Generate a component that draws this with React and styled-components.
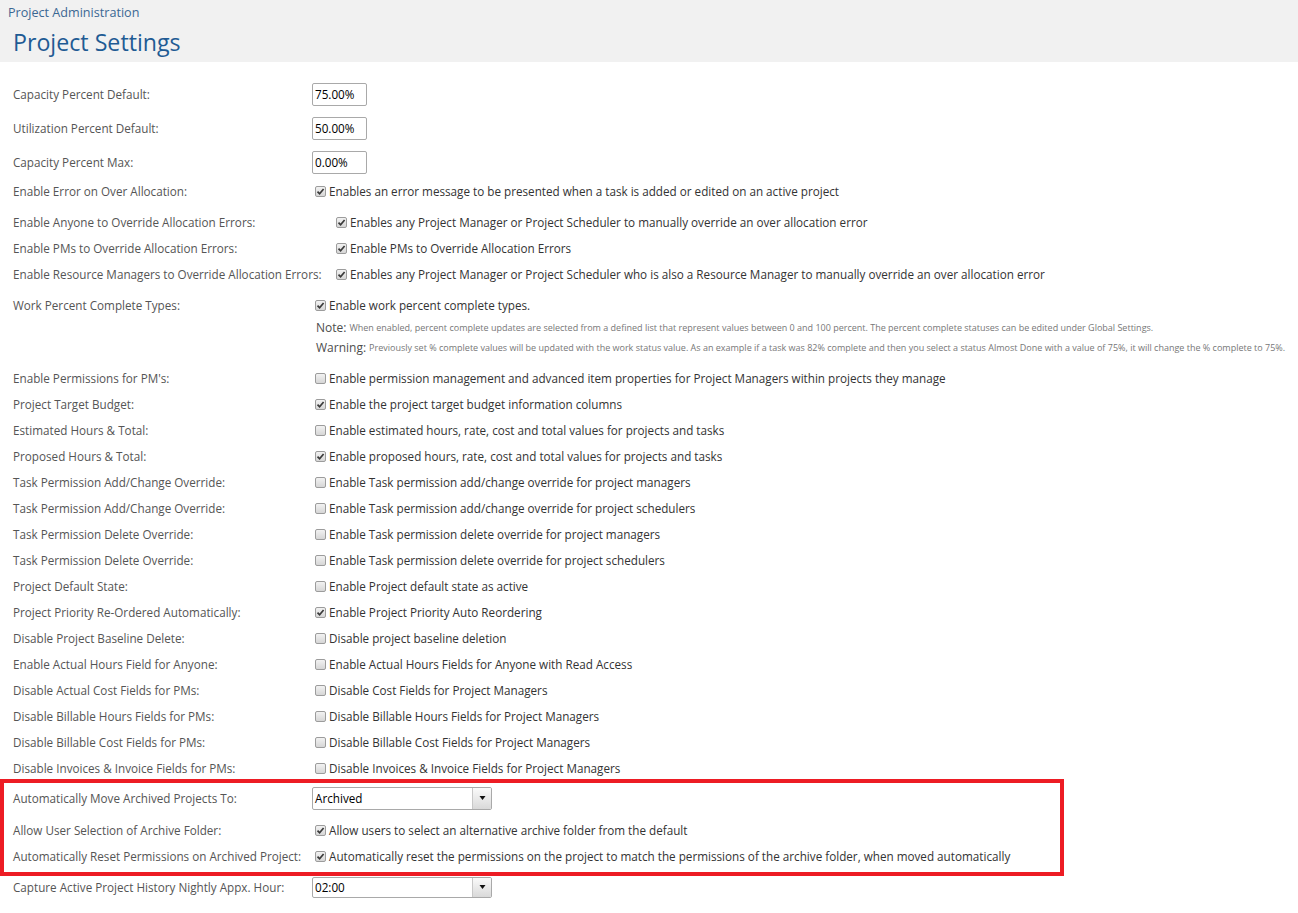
import React from "react";
import styled, { createGlobalStyle } from "styled-components";

const GlobalStyle = createGlobalStyle`
  html, body { margin: 0; padding: 0; background: #ffffff; }
  body { font-family: "Open Sans", "Liberation Sans", sans-serif; font-size: 11.7px; color: #555; }
  * { box-sizing: border-box; }
`;

const Page = styled.div`
  width: 1298px;
  min-height: 913px;
  background: #fff;
`;

const Header = styled.header`
  height: 62px;
  background: #f1f1f1;
  padding: 4px 0 0 8px;
`;

const Breadcrumb = styled.div`
  font-size: 12.6px;
  line-height: 18px;
  color: #3b6793;
`;

const Title = styled.h1`
  margin: 4px 0 0 5px;
  font-size: 23.2px;
  font-weight: 400;
  line-height: 32px;
  color: #1f5b94;
`;

const Content = styled.div`
  padding-top: 15px;
`;

const Row = styled.div`
  display: grid;
  grid-template-columns: ${(p) => p.$labelW || 299}px 1fr;
  align-items: center;
  height: ${(p) => p.$h || 26}px;
  margin-top: ${(p) => p.$mt || 0}px;
  padding-left: ${(p) => (p.$pl === undefined ? 13 : p.$pl)}px;
`;

const Label = styled.div`
  color: #555;
  font-size: 11.7px;
  white-space: nowrap;
`;

const Control = styled.div`
  display: flex;
  align-items: center;
  white-space: nowrap;
`;

const Box = styled.span`
  display: inline-flex;
  align-items: center;
  justify-content: center;
  width: 11px;
  height: 11px;
  margin: 0 3px 0 3px;
  border: 1px solid #9c9c9c;
  border-radius: 2px;
  background: linear-gradient(#f2f2f2, #d6d6d6);
  flex: none;
`;

const Desc = styled.span`
  color: #333;
  font-size: 11.7px;
`;

const TextInput = styled.input`
  width: 55px;
  height: 23px;
  border: 1px solid #a9a9a9;
  border-radius: 2px;
  padding: 0 2px;
  font-family: "Open Sans", "Liberation Sans", sans-serif;
  font-size: 11.7px;
  color: #000;
  background: #fff;
  outline: none;
`;

const SelectBox = styled.div`
  display: flex;
  width: 180px;
  height: ${(p) => p.$h || 23}px;
  border: 1px solid #a9a9a9;
  border-radius: 2px;
  background: #fff;
  overflow: hidden;
`;

const SelectValue = styled.div`
  flex: 1;
  display: flex;
  align-items: center;
  padding-left: 2px;
  font-size: 11.7px;
  color: #000;
`;

const SelectArrow = styled.div`
  width: 19px;
  display: flex;
  align-items: center;
  justify-content: center;
  border-left: 1px solid #c8c8c8;
  background: linear-gradient(#fafafa, #d9d9d9);
`;

const Notes = styled.div`
  padding-left: 316px;
`;

const NoteLine = styled.div`
  height: 20px;
  display: flex;
  align-items: center;
  white-space: nowrap;
`;

const NoteKey = styled.span`
  font-size: 12px;
  color: #4d4d4d;
  margin-right: 3px;
`;

const NoteText = styled.span`
  font-size: 9px;
  color: #777;
`;

const Highlight = styled.section`
  width: 1064px;
  margin-top: -2px;
  border: 4px solid #ed1c24;
  padding-bottom: 3px;
`;

function CheckBox({ checked }) {
  return (
    <Box>
      {checked && (
        <svg width="9" height="9" viewBox="0 0 9 9">
          <path d="M1.5 4.6 L3.6 6.8 L7.6 2" fill="none" stroke="#3a3a3a" strokeWidth="1.7" />
        </svg>
      )}
    </Box>
  );
}

function Check({ checked, children }) {
  return (
    <Control>
      <CheckBox checked={checked} />
      <Desc>{children}</Desc>
    </Control>
  );
}

function Select({ value, h }) {
  return (
    <SelectBox $h={h}>
      <SelectValue>{value}</SelectValue>
      <SelectArrow>
        <svg width="7" height="4" viewBox="0 0 7 4">
          <path d="M0.5 0 H6.5 L3.5 4 Z" fill="#111" />
        </svg>
      </SelectArrow>
    </SelectBox>
  );
}

const percentRows = [
  ["Capacity Percent Default:", "75.00%"],
  ["Utilization Percent Default:", "50.00%"],
  ["Capacity Percent Max:", "0.00%"],
];

const overrideRows = [
  ["Enable Anyone to Override Allocation Errors:", "Enables any Project Manager or Project Scheduler to manually override an over allocation error"],
  ["Enable PMs to Override Allocation Errors:", "Enable PMs to Override Allocation Errors"],
  ["Enable Resource Managers to Override Allocation Errors:", "Enables any Project Manager or Project Scheduler who is also a Resource Manager to manually override an over allocation error"],
];

const settingRows = [
  ["Enable Permissions for PM's:", false, "Enable permission management and advanced item properties for Project Managers within projects they manage"],
  ["Project Target Budget:", true, "Enable the project target budget information columns"],
  ["Estimated Hours & Total:", false, "Enable estimated hours, rate, cost and total values for projects and tasks"],
  ["Proposed Hours & Total:", true, "Enable proposed hours, rate, cost and total values for projects and tasks"],
  ["Task Permission Add/Change Override:", false, "Enable Task permission add/change override for project managers"],
  ["Task Permission Add/Change Override:", false, "Enable Task permission add/change override for project schedulers"],
  ["Task Permission Delete Override:", false, "Enable Task permission delete override for project managers"],
  ["Task Permission Delete Override:", false, "Enable Task permission delete override for project schedulers"],
  ["Project Default State:", false, "Enable Project default state as active"],
  ["Project Priority Re-Ordered Automatically:", true, "Enable Project Priority Auto Reordering"],
  ["Disable Project Baseline Delete:", false, "Disable project baseline deletion"],
  ["Enable Actual Hours Field for Anyone:", false, "Enable Actual Hours Fields for Anyone with Read Access"],
  ["Disable Actual Cost Fields for PMs:", false, "Disable Cost Fields for Project Managers"],
  ["Disable Billable Hours Fields for PMs:", false, "Disable Billable Hours Fields for Project Managers"],
  ["Disable Billable Cost Fields for PMs:", false, "Disable Billable Cost Fields for Project Managers"],
  ["Disable Invoices & Invoice Fields for PMs:", false, "Disable Invoices & Invoice Fields for Project Managers"],
];

export default function App() {
  return (
    <Page>
      <GlobalStyle />
      <Header>
        <Breadcrumb>Project Administration</Breadcrumb>
        <Title>Project Settings</Title>
      </Header>
      <Content>
        {percentRows.map(([label, value]) => (
          <Row key={label} $h={34}>
            <Label>{label}</Label>
            <Control>
              <TextInput readOnly value={value} />
            </Control>
          </Row>
        ))}
        <Row $h={24}>
          <Label>Enable Error on Over Allocation:</Label>
          <Check checked>Enables an error message to be presented when a task is added or edited on an active project</Check>
        </Row>
        {overrideRows.map(([label, desc], i) => (
          <Row key={label} $labelW={320} $mt={i === 0 ? 6 : 0}>
            <Label>{label}</Label>
            <Check checked>{desc}</Check>
          </Row>
        ))}
        <Row $h={24} $mt={6}>
          <Label>Work Percent Complete Types:</Label>
          <Check checked>Enable work percent complete types.</Check>
        </Row>
        <Notes>
          <NoteLine>
            <NoteKey>Note:</NoteKey>
            <NoteText>
              When enabled, percent complete updates are selected from a defined list that represent values between 0 and 100 percent. The percent complete statuses can be edited under Global Settings.
            </NoteText>
          </NoteLine>
          <NoteLine>
            <NoteKey>Warning:</NoteKey>
            <NoteText>
              Previously set % complete values will be updated with the work status value. As an example if a task was 82% complete and then you select a status Almost Done with a value of 75%, it will change the % complete to 75%.
            </NoteText>
          </NoteLine>
        </Notes>
        {settingRows.map(([label, checked, desc], i) => (
          <Row key={label + desc} $mt={i === 0 ? 8 : 0}>
            <Label>{label}</Label>
            <Check checked={checked}>{desc}</Check>
          </Row>
        ))}
        <Highlight>
          <Row $h={30} $pl={9}>
            <Label>Automatically Move Archived Projects To:</Label>
            <Control>
              <Select value="Archived" />
            </Control>
          </Row>
          <Row $mt={4} $pl={9}>
            <Label>Allow User Selection of Archive Folder:</Label>
            <Check checked>Allow users to select an alternative archive folder from the default</Check>
          </Row>
          <Row $pl={9}>
            <Label>Automatically Reset Permissions on Archived Project:</Label>
            <Check checked>Automatically reset the permissions on the project to match the permissions of the archive folder, when moved automatically</Check>
          </Row>
        </Highlight>
        <Row $h={22}>
          <Label>Capture Active Project History Nightly Appx. Hour:</Label>
          <Control>
            <Select value="02:00" h={21} />
          </Control>
        </Row>
      </Content>
    </Page>
  );
}
